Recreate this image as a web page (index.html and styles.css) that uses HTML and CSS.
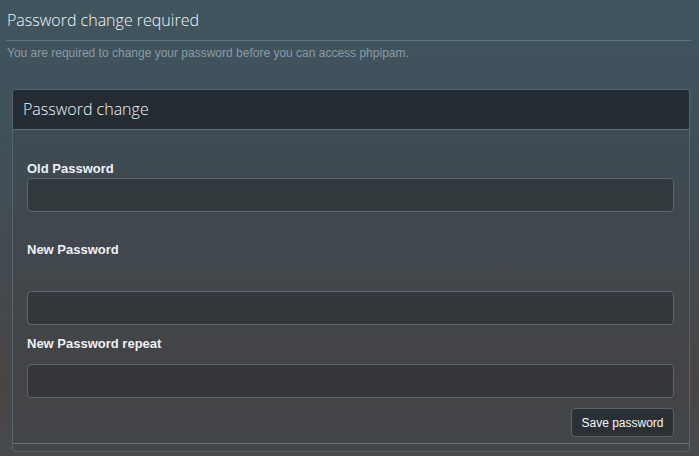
FILE: index.html
```html
<!DOCTYPE html>
<html>
<head>
<meta charset="utf-8">
<link rel="stylesheet" href="styles.css">
</head>
<body>
<div class="page">
  <h1 class="title">Password change required</h1>
  <p class="note">You are required to change your password before you can access phpipam.</p>
  <div class="card">
    <div class="card-head">Password change</div>
    <div class="card-body">
      <div class="field">
        <label class="label">Old Password</label>
        <input class="input" type="password">
      </div>
      <div class="field field-gap">
        <label class="label">New Password</label>
        <div class="spacer"></div>
        <input class="input" type="password">
      </div>
      <div class="field field-tight">
        <label class="label">New Password repeat</label>
        <input class="input" type="password">
      </div>
      <div class="actions">
        <button class="btn" type="button">Save password</button>
      </div>
    </div>
    <div class="card-foot"></div>
  </div>
</div>
</body>
</html>
```

FILE: styles.css
```css
html, body {
  margin: 0;
  padding: 0;
  height: 100%;
}
body {
  background: linear-gradient(180deg, #41555f 0%, #3f515b 25%, #444a4e 60%, #494444 85%, #474a4e 100%);
  font-family: "Liberation Sans", Arial, sans-serif;
  overflow: hidden;
}
.page {
  padding: 7px 8px 0 6px;
}
.title {
  margin: 0;
  padding: 2px 0 9px 1px;
  font-family: "Open Sans", sans-serif;
  font-weight: 300;
  font-size: 16px;
  line-height: 22px;
  color: #f2f5f7;
  border-bottom: 1px solid #5d7180;
}
.note {
  margin: 0;
  padding: 5px 0 0 1px;
  font-size: 12px;
  line-height: 14px;
  color: #8b9aa3;
}
.card {
  margin: 29px 1px 0 6px;
  border: 1px solid #57646d;
  border-radius: 4px;
  background: rgba(60, 66, 72, 0.35);
  overflow: hidden;
}
.card-head {
  background: #232c32;
  border-bottom: 1px solid #5f6b74;
  padding: 0 10px;
  height: 39px;
  line-height: 39px;
  font-family: "Open Sans", sans-serif;
  font-weight: 300;
  font-size: 16px;
  color: #f2f5f7;
}
.card-body {
  padding: 31px 15px 6px 14px;
  border-bottom: 1px solid #66717a;
}
.field {
  display: flex;
  flex-direction: column;
}
.label {
  font-weight: bold;
  font-size: 13px;
  line-height: 15px;
  color: #eef1f3;
  margin-bottom: 2px;
}
.spacer {
  height: 32px;
}
.field-gap {
  margin-top: 30px;
}
.field-tight {
  margin-top: 11px;
}
.field-tight .label {
  margin-bottom: 13px;
}
.input {
  box-sizing: border-box;
  height: 34px;
  width: 100%;
  margin: 0;
  background: rgba(40, 44, 48, 0.55);
  border: 1px solid #5a6670;
  border-radius: 4px;
  outline: none;
}
.actions {
  display: flex;
  justify-content: flex-end;
  margin-top: 10px;
}
.btn {
  box-sizing: border-box;
  width: 103px;
  height: 29px;
  background: #2b3035;
  border: 1px solid #59636b;
  border-radius: 4px;
  color: #f4f6f8;
  font-family: "Liberation Sans", Arial, sans-serif;
  font-size: 12px;
  padding: 0;
}
.card-foot {
  height: 7px;
}
```
